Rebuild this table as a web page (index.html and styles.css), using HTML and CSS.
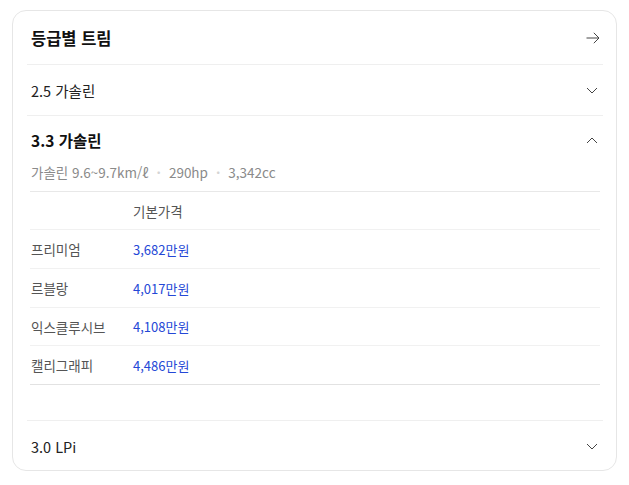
FILE: index.html
```html
<!DOCTYPE html>
<html lang="ko">
<head>
<meta charset="utf-8">
<link rel="stylesheet" href="styles.css">
</head>
<body>
<div class="card">
  <div class="head">
    <span class="head-title">등급별 트림</span>
    <svg class="icon arrow" width="14" height="12" viewBox="0 0 14 12"><path d="M0.5 6H13M7.8 0.8L13 6L7.8 11.2" fill="none" stroke="#444" stroke-width="1"/></svg>
  </div>
  <div class="section">
    <div class="row-head">
      <span class="row-title">2.5 가솔린</span>
      <svg class="icon" width="12" height="7" viewBox="0 0 12 7"><path d="M1 1L6 6L11 1" fill="none" stroke="#444" stroke-width="1"/></svg>
    </div>
  </div>
  <div class="section open">
    <div class="open-head">
      <div class="open-title-line">
        <span class="open-title">3.3 가솔린</span>
        <svg class="icon" width="12" height="7" viewBox="0 0 12 7"><path d="M1 6L6 1L11 6" fill="none" stroke="#444" stroke-width="1"/></svg>
      </div>
      <div class="spec">
        <span>가솔린 9.6~9.7km/ℓ</span><span class="dot">·</span><span>290hp</span><span class="dot">·</span><span>3,342cc</span>
      </div>
    </div>
    <div class="table">
      <div class="tr th"><span></span><span class="col-head">기본가격</span></div>
      <div class="tr"><span class="label">프리미엄</span><span class="price">3,682만원</span></div>
      <div class="tr"><span class="label">르블랑</span><span class="price">4,017만원</span></div>
      <div class="tr short"><span class="label">익스클루시브</span><span class="price">4,108만원</span></div>
      <div class="tr last"><span class="label">캘리그래피</span><span class="price">4,486만원</span></div>
    </div>
    <div class="spacer"></div>
  </div>
  <div class="section">
    <div class="row-head">
      <span class="row-title">3.0 LPi</span>
      <svg class="icon" width="12" height="7" viewBox="0 0 12 7"><path d="M1 1L6 6L11 1" fill="none" stroke="#444" stroke-width="1"/></svg>
    </div>
  </div>
</div>
</body>
</html>
```

FILE: styles.css
```css
* { box-sizing: border-box; }
html, body { margin: 0; padding: 0; background: #fff; }
body {
  padding: 10px 0 0 12px;
  font-family: "Noto Sans CJK KR", "Noto Sans", sans-serif;
  color: #222;
}
.card {
  width: 605px;
  height: 461px;
  border: 1px solid #e6e6e6;
  border-radius: 14px;
  padding: 0 13px 0 14px;
  display: flex;
  flex-direction: column;
}
.head {
  height: 54px;
  flex: none;
  display: flex;
  align-items: center;
  justify-content: space-between;
  padding: 0 3px 0 4px;
  border-bottom: 1px solid #efefef;
}
.head-title {
  font-size: 16.5px;
  font-weight: 700;
  color: #111;
}
.icon { display: block; flex: none; }
.section { border-bottom: 1px solid #efefef; flex: none; }
.section:last-child { border-bottom: none; }
.row-head {
  height: 50px;
  display: flex;
  align-items: center;
  justify-content: space-between;
  padding: 0 5px 0 4px;
}
.row-title { font-size: 14.5px; color: #222; }
.open-head {
  margin: 0 3px;
  padding: 13px 2px 10px 1px;
  border-bottom: 1px solid #e8e8e8;
}
.open-title-line {
  height: 22px;
  display: flex;
  align-items: center;
  justify-content: space-between;
}
.open-title { font-size: 15.5px; font-weight: 700; color: #111; }
.spec {
  margin-top: 12px;
  height: 18px;
  font-size: 13.5px;
  line-height: 18px;
  color: #8a8a8a;
  display: flex;
  align-items: center;
}
.dot { color: #d4d4d4; margin: 0 8px; font-weight: 700; }
.table { margin: 0 3px; }
.tr {
  display: grid;
  grid-template-columns: 102px 1fr;
  height: 39px;
  align-items: center;
  padding-left: 1px;
  border-bottom: 1px solid #f1f1f1;
  font-size: 13px;
}
.tr.th { height: 38px; }
.tr.short { height: 38px; }
.tr.last { border-bottom-color: #e2e2e2; }
.col-head { color: #555; font-size: 13.5px; }
.label { color: #555; font-size: 13.5px; }
.price { color: #2447d6; }
.spacer { height: 35px; }
```
